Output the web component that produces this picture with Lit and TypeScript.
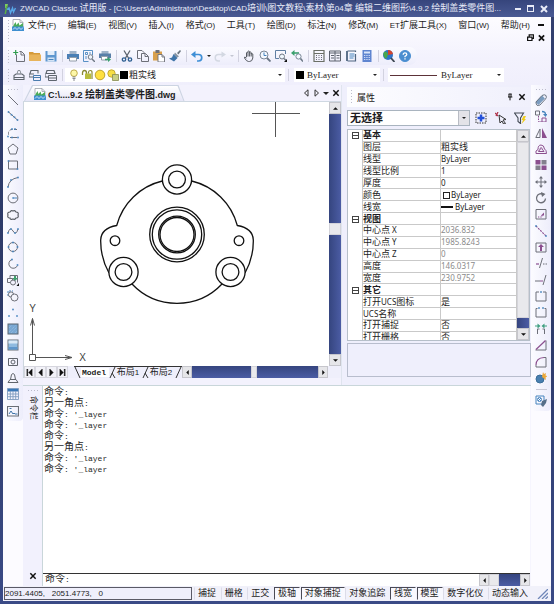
import { LitElement, html, svg, css, TemplateResult } from "lit";
import { customElement } from "lit/decorators.js";
import { classMap } from "lit/directives/class-map.js";

const G = "#6d6f78";
const B = "#4684be";
const P = "#8b4f8f";

const line = (d: string, c = G, w = 1, dash = "") =>
  svg`<path d=${d} fill="none" stroke=${c} stroke-width=${w} stroke-dasharray=${dash || "none"} />`;
const area = (d: string, c = B) => svg`<path d=${d} fill=${c} />`;
const ring = (x: number, y: number, r: number, c = G, f = "none", w = 1) =>
  svg`<circle cx=${x} cy=${y} r=${r} fill=${f} stroke=${c} stroke-width=${w} />`;
const dots = (...pts: number[][]) =>
  pts.map(([x, y]) => svg`<rect x=${x - 0.8} y=${y - 0.8} width="1.6" height="1.6" fill=${B} />`);

// Every glyph is drawn on a 12 x 12 grid.
const ICONS: Record<string, unknown> = {
  logo: [area("M1 1h3l-1 4H1z", "#7ccb5e"), area("M3.5 3L2 11H.5L2 3z", "#5bb047"), line("M3 6.500l2-1.500 1.500 5L8.500 5l1 4 2-4", "#58a8e8", 1.4)],
  doc: [area("M1 .5h7l3 3v8H1z", "#fff"), line("M1 .5h7l3 3v4M8 .5v3h3M1 .5v6", "#9aa0a8", 0.8), area("M.5 8l3-5 1 3 2-2.500 1 3L11 4v4z", "#4bab58"), area("M0 7.500h12V12H0z", "#3f8fd0"), line("M1 10.500l2-2 2 2 2-2 2 2 2-2", "#e8f6ff", 0.8)],
  new: [line("M3.5 4.500v7h8v-7l-3-3h-2M8 1.500v3.500h3.500", G), line("M.2 2.500h5M2.7 0v5", "#2f9d4e", 1.2)],
  open: [area("M0 2h4l1 1h6v2H0z", "#d59a3a"), area("M0 4.5h12v6.5H0z", "#e8b45c")],
  save: [area("M.5 1h11v10.5H.5z", "#5f97cf"), area("M2.5 1h7v4h-7z", "#e4eefa"), area("M2.5 7.5h7v4h-7z", "#d3e3f5"), line("M3.5 9.5h5", B, 1)],
  print: [area("M2.5 1h7v3h-7z", "#9fb2c8"), area("M0 4h12v5H0z", "#4a7fb5"), area("M2.5 7h7v4h-7z", "#fff"), line("M2.5 7.5h7v3.5h-7z", "#7a8796", 0.8)],
  preview: [line("M9.5 5V.5h-9v11h5M2.5 2.5h2v2h-2zM6 3h2M3 6v3", B, 0.9), ring(7.5, 7, 2.3, "#6f7884", "#eef6fd"), line("M9 9l3 3", "#6f7884", 1.4)],
  plot: [area("M2.5 1h7v3h-7z", "#9fb2c8"), area("M0 3.5h12v4.5H0z", "#587fa8"), area("M2.5 6h6v4h-6z", "#fff"), line("M2.5 6.5h6v3.5h-6z", "#7a8796", 0.8), area("M6 8.7h3V7l3 2.5L9 12v-1.700H6z", "#3aa06e")],
  cut: [line("M3 .5l4.500 7.500M9 .5L4.500 8", "#5c646e", 1.3), ring(3, 9.500, 1.700, "#2e5f92", "none", 1.3), ring(9, 9.500, 1.700, "#2e5f92", "none", 1.3)],
  copy: [line("M3.500 8.500h-3v-8h4.500l2 2v1", G), line("M4.500 3.500h4l3 3v5h-7zM8 3.500v3h3", G)],
  paste: [area("M0 1.500h9v9H0z", "#d9a04c"), area("M2.500 0h4v3h-4z", "#6d6f78"), area("M5 4.500h4l2.500 2.500v5H5z", "#fff"), line("M5 4.500h4l2.500 2.500v5H5zM9 4.500v2.500h2.500", G, 0.9)],
  brush: [area("M8 3l3-3 1 1-2.500 3.500z", "#69747f"), area("M6 2.500l4 4-2 1-3-3z", "#8593a1"), area("M4.500 4l4 4L5 11.500 0 8.500l3-1z", "#3f74a8")],
  undo: [line("M2 4.500h5.500a3 3 0 0 1 0 6.500H6", "#3f8fd6", 1.7), area("M4.500 1v7L0 4.500z", "#3f8fd6")],
  redo: [line("M10 4.500H4.500a3 3 0 0 0 0 6.500H6", "#d3d8e2", 1.5), area("M7.500 1.500v6L12 4.500z", "#d3d8e2")],
  hand: [line("M3.500 7V2.700q.8-1.200 1.500 0V1.500q.8-1.200 1.600 0v1q.8-1 1.600 0v1.500q.9-1 1.600 0V8q-.5 3.500-3.300 3.500h-1Q3.500 11.500 1.500 8q-.5-2 2 0M5 2.500v4M6.600 2v4.500M8.200 3v3.500", "#565a62", 1)],
  zoomrt: [ring(5, 5, 4, "#7a8796", "#f4f9ff"), line("M5 2.500V5.500H7.500", B, 1), line("M8 8l3.500 3.500", "#6b7785", 1.8)],
  zoomwin: [line("M4 8.500H.5v-8h10V4", "#5f7fa3"), ring(7, 6.500, 2.500, "#6f7884", "#eef6fd"), line("M9 8.500l2 2", "#6f7884", 1.6), area("M12 9v3H9z", "#111")],
  zoomprev: [line("M2 3h6", "#3aa06e", 1.6), area("M3.500 0v6L0 3z", "#3aa06e"), ring(7.500, 6.500, 2.600, "#7a8796", "#f4f9ff"), line("M9.500 8.500l2.500 3", "#6b7785", 1.6)],
  calcsheet: [line("M1 .5h10v11H1zM1 3.500h10", "#6b6f66", 1.2), line("M3 5.500h1M5.500 5.500h1M8 5.500h1M3 7.500h1M5.500 7.500h1M8 7.500h1M3 9.500h1M5.500 9.500h1M8 9.500h1", "#6d6f78", 1.2)],
  palette: [line("M.5 1h11v10H.5zM6 1v10M.5 3h11M2 5.500h3M2 8h3M7.500 5.500h3M7.500 8h3", "#5d636e", 1)],
  sheet: [line("M10.500 4v7h-8M2.500 1h8v1", "#4f6580", 1.2), line("M2 1v10", "#4f6580", 1.8), line("M4.500 4h5M4.500 6h5M4.500 8h4", B, 1)],
  calc: [area("M1.500 0h9v12h-9z", "#5f85d0"), area("M3 1.500h6v2H3z", "#dbe6fa"), line("M3 5.500h6M3 7.500h6M3 9.500h6", "#d0dcf6", 1, "1.300 1")],
  globe: [area("M5 0a5 5 0 0 1 0 10A5 5 0 0 1 5 0z", "#2f73c8"), area("M5 0q4 0 5 4L5 5z", "#d2452f"), area("M1 2q3-2 4 3l-2 4Q-1 6 1 2z", "#47a84c"), line("M8 8l3.500 4", "#3e4754", 1.8)],
  help: [ring(6, 6, 5.500, "#4a8ed0", "#4a8ed0"), line("M4.200 4.700q0-1.800 1.800-1.800t1.800 1.600Q7.800 5.500 6 6.300v1M6 8.300v1.300", "#fff", 1.3)],
  layers: [line("M1 6.500L3 5h6l2 1.500v4H1zM1 8.500h10", "#5f666f", 1.1), line("M4 5l1-3.500h2L8 5", "#8a9098", 1)],
  layerprev: [line("M1 4.500L2 1.500h7v3M0 5h5M0 8h4M0 5v3", "#5f666f", 1.1), line("M4.500 6.500h7v5h-7zM4.500 8.500h7", "#4b7daf", 1)],
  layerstate: [line("M1 4.500L2 1.500h7l1 3zM0 5v3h4", "#5f666f", 1.2), line("M3.500 6.500h8v5h-8zM3.500 9h8", "#5f666f", 1)],
  bulb: [ring(6, 4.200, 3.300, "#b8a23c", "#fdf7a8", 0.9), line("M4.500 8h3M4.500 9.500h3M5 11h2", "#7d7f88", 0.9)],
  lock: [line("M1.500 6V4q0-2.500 2-2.500T5.500 4v2", "#8a8a34", 1.3), area("M4 4.500h6V10H4z", "#b9bd3c"), line("M7.500 4.500V3q.3-1.500 2-1.500T11 4v6", "#8a8a34", 1.2)],
  sun: [ring(6, 6, 4.800, "#b79a26", "#ffe040", 0.9)],
  sunlayer: [ring(4.500, 4.500, 3.700, "#b79a26", "#f7df45", 0.8), area("M5.500 5.500h6v6h-6z", "#c9cf85"), line("M5.500 5.500h6v6h-6z", "#858a52", 0.8)],
  lineTool: [line("M1 1l10 10", G, 1)],
  xline: [line("M1 1.500l10 9", G, 1), dots([1.500, 2], [4.500, 4.700], [7.500, 7.300], [10.500, 10])],
  pline: [line("M10 2.500H5a3.500 3.500 0 0 0-3.500 4v2", G, 1, "3 1.500"), line("M3 10.500h7", G, 1), dots([5, 2], [1, 9.500], [5, 10.500], [11, 10.500], [8, 2])],
  polygon: [line("M6 1l5 4-2 6H3L1 5z", G, 1)],
  rect: [line("M1.500 2h9v8h-9z", G, 1), dots([1.500, 2], [10.500, 10])],
  arc: [line("M1 11Q2 3 11 1.500", G, 1), dots([1, 11], [4, 4], [11, 1.500])],
  circle: [ring(6, 6, 4.900), line("M6 6h4M6 5v2", B, 1)],
  cloud: [line("M3 3q1-2 3-1 2-1 3 1 3 0 2 3 1 3-2 3-1 2-3 1-3 1-3-1-3 0-2-3-1-3 2-3z", "#50545c", 1.1)],
  spline: [line("M1 8q2-7 5-2t5-2", G, 1), dots([1, 8], [4, 4], [8, 8], [11, 4])],
  ellipse: [ring(6, 6, 4.500), dots([6, 1.500], [1.500, 6], [6, 10.500], [10.500, 6])],
  earc: [line("M5 1.500a4.500 4.500 0 1 0 5.500 6", G, 1), dots([5, 1.500], [10.500, 7])],
  insert: [line("M3 1.500h7.500v7M3 1.500v3", G, 1), area("M7 2v2H5l3 3 3-3H9V2z", "#3f9f6d"), line("M.5 4.500h5v4h-5z", G), ring(6, 8.500, 2.500, G, "#f1f0fc"), area("M12 9v3H9.500z", "#111")],
  block: [line("M1 6V1h5", B, 1, "2 1"), ring(4, 4.500, 2.600, G), ring(7.500, 7.500, 3.500, G, "#f4f4fc")],
  points: [dots([6, 2.500], [2, 9], [10, 9])],
  hatch: [svg`<rect x="1" y="1" width="10" height="10" fill="#79a7d3" stroke="#5a6470" />`, line("M2 5l3-3M2 9l7-7M4 10l6-6M8 10l2-2", "#a8c8e6", 0.7, "1 1")],
  gradient: [svg`<rect x="1" y="1" width="10" height="10" fill="#8fbbe0" stroke="#6a7078" /><rect x="1.500" y="1.500" width="9" height="3" fill="#d9e9f6" /><rect x="1.500" y="8" width="9" height="2.500" fill="#5f97cc" />`],
  region: [line("M1.500 2.500h9v7h-9z", "#60646c", 1), ring(6, 6, 2, "#60646c")],
  wipe: [line("M3.500 7.500L4.500 2.500q1.500-2 3 0L8.500 7.500zM1 10.500L3 7.500h6l2 3z", "#60646c", 1)],
  table: [area("M.5.5h11v3H.5z", "#3a78b8"), line("M.5.5h11v11H.5zM.5 6h11M.5 8.700h11M3.300 3v8.500M6 3v8.500M8.700 3v8.500", "#7f9cc0", 0.9)],
  image: [line("M.5 1.500h11v9.500H.5z", "#6a6e76", 1.1), line("M2 9l2-3 2 3 1-1 1 1h2.500M2.500 3.500h2", "#3f74a8", 1)],
  erase: [line("M2 9.500L8.500 3", "#7b9cbf", 4), line("M1 8l6-6.500q2.500-1.500 4 0 1 2-.5 3.500L5 11q-4 2-4-3z", "#6a7684", 1)],
  copyobj: [line("M.5 1h4v4h-4z", G), line("M7 1.500q3.500 0 3.500 3", B, 1.300), area("M8 4h4.500L10.500 7z", B), line("M3.500 6v5.500h3", P, 1, "1.500 1"), line("M7 8h4v4H7z", P)],
  mirror: [area("M7 1l5 10H7z", P), line("M5 2L.8 10.500H5z", G, 1)],
  offset: [line("M1 10.500q-1-3 2-4Q3 2 6 2t3.500 4q2 1 2 4.500z", P, 1), line("M3.500 8.500q0-1.500 1.500-1.500Q5 4.500 6 4.500T7.500 7q1 0 1.500 1.500z", P, 1)],
  array: [area("M.5 1h5v4.500h-5zM6.500 6.500h5v4.500h-5z", P), area("M6.500 1h5v4.500h-5zM.5 6.500h5v4.500h-5z", "#83808e")],
  move: [line("M6 1.500v9M1.500 6h9", G, 1), area("M6 0l2 2.500H4zM6 12l2-2.500H4zM0 6l2.500-2v4zM12 6L9.500 4v4z", G)],
  rotate: [line("M8.500 2.500A4.500 4.500 0 1 0 10.500 6.500", G, 1.3), area("M6 0l4.500 2L7 5z", G)],
  scale: [line("M1 1.500h10v9.500H1z", G), line("M3 9h4M7 7v2", P, 1, "1 .7"), area("M9 4.500v3H6z", P)],
  stretch: [line("M1 1l10 10", P, 1.1, "2 1"), dots([1, 1], [11, 11])],
  extrude: [line("M1 2h10v9H1z", G), area("M6 3l3 3H7v4H5V6H3z", P)],
  trim: [line("M1 7h3", P, 1.200), line("M4.500 11L7.500 1", G), line("M8 7h4", G, 1, "1.500 1")],
  extend: [line("M0 7h5", G, 1), line("M5 7h3", P), line("M8 11l3-10", G)],
  break1: [line("M4 2H1v9h10V2H8", G, 1), dots([6, 2])],
  break2: [line("M2.500 2.500H1V11h10V2.500H9.500", G, 1), dots([4, 2], [8, 2])],
  join: [line("M2.500 11V6h2M9.500 11V6h-2", G), area("M5.500 3L2.500.5v5zM6.500 3l3-2.500v5z", "#3f9f80"), line("M0 3h4M8 3h4", "#3f9f80", 1.200)],
  chamfer: [line("M.5 11h10.500V1.500", G), line("M1 10.500L10.500 1.500", P, 1.200)],
  fillet: [line("M1 9v2h10V1.500H9", G), line("M1 9q0-7 8-7.500", P, 1.200)],
  explode: [ring(5, 7, 4, "#3a6d98", "#487fb0"), area("M8 0l1 2 2-1-.5 2.500 2 .5-2 1.500L11 8 9 6.500 7 5z", "#eba83a")],
  props: [line("M1 1h8v8H1z", B, 1), line("M3 3l3 3M3 6l3-3", B, 1), ring(4.500, 4.500, 2, B), area("M7 6l5-2-1 4-3 4-2-2z", "#566f88")],
  pick: [line("M1 1h10v10H1z", "#333", 1, "1.500 1"), line("M6 2.500v7M2.500 6h7", "#2450d8", 2.500)],
  selobj: [line("M0 1l3 3M3 0L1 4", "#b03048", 1.2), line("M4 3l7 4.500-3 .5 2.500 3.500-2 .5L7 9l-2 2z", "#333", 1)],
  filter: [line("M.5 1h9L6.500 6v5.500L4 9.500V6z", "#444b55", 1.1), area("M9.500 4h2.500L10.500 7H12L7.500 12 9 8H7.500z", "#f0cc1c")],
  pin: [line("M4 1.500h4.500M4.500 1.500V6M7.500 1.500V6M3 6h6.500M6 6v5", "#111", 1.500)],
  close: [line("M2 2l8 8M10 2l-8 8", "#111", 2.200)],
};

const icon = (name: string, cls = "ic") =>
  html`<svg class=${cls} viewBox="0 0 12 12" aria-hidden="true">${ICONS[name]}</svg>`;

// Splits text so that Han runs can take a slightly larger size than the Latin ones.
const mix = (text: string) =>
  text
    .split(/([\u4e00-\u9fff]+)/)
    .filter((s) => s)
    .map((s) => (/[\u4e00-\u9fff]/.test(s) ? html`<span class="cj">${s}</span>` : s));

const btn = (name: string) => html`<button class="ib" aria-label=${name}>${icon(name)}</button>`;

const STANDARD = [
  "new open save", "print preview plot", "cut copy paste brush",
  "undo v redo w", "hand zoomrt zoomwin zoomprev", "calcsheet palette sheet calc", "globe help",
];
const DRAW = "lineTool xline pline polygon rect arc circle cloud spline ellipse earc insert block points hatch gradient region wipe table image".split(" ");
const MODIFY = "erase copyobj mirror offset array move rotate scale stretch extrude trim extend break1 break2 join chamfer fillet explode".split(" ");
const MENUS = ["文件(F)", "编辑(E)", "视图(V)", "插入(I)", "格式(O)", "工具(T)", "绘图(D)", "标注(N)", "修改(M)", "ET扩展工具(X)", "窗口(W)", "帮助(H)"];

interface Row { k: string; v?: string; head?: boolean; dim?: boolean; mark?: string }
const ROWS: Row[] = [
  { k: "基本", head: true }, { k: "图层", v: "粗实线" }, { k: "线型", v: "ByLayer" },
  { k: "线型比例", v: "1" }, { k: "厚度", v: "0" }, { k: "颜色", v: "ByLayer", mark: "swatch" },
  { k: "线宽", v: "ByLayer", mark: "dash" }, { k: "视图", head: true },
  { k: "中心点 X", v: "2036.832", dim: true }, { k: "中心点 Y", v: "1985.8243", dim: true },
  { k: "中心点 Z", v: "0", dim: true }, { k: "高度", v: "146.0317", dim: true },
  { k: "宽度", v: "230.9752", dim: true }, { k: "其它", head: true },
  { k: "打开UCS图标", v: "是" }, { k: "UCS名称", v: "" }, { k: "打开捕捉", v: "否" }, { k: "打开栅格", v: "否" },
];
const MODES: [string, boolean][] = [
  ["捕捉", false], ["栅格", false], ["正交", false], ["极轴", true], ["对象捕捉", true],
  ["对象追踪", false], ["线宽", true], ["模型", true], ["数字化仪", false], ["动态输入", false],
];
const LOG = ["命令:", "另一角点:", "命令: '_layer", "命令: '_layer", "命令:", "另一角点:", "命令: '_layer", "命令: '_layer"];

const base = css`
  * { box-sizing: border-box; }
  button, select, input {
    font: inherit; color: inherit; background: none; border: 0; padding: 0; margin: 0;
    border-radius: 0; appearance: none; outline: none; min-width: 0;
  }
  .cj { font-size: 9px; }
  .ic { width: 12px; height: 12px; display: block; flex: none; }
  .ib { width: 16px; height: 16px; flex: none; display: flex; align-items: center; justify-content: center; }
  .tri { width: 0; height: 0; flex: none; border: 3px solid transparent; border-top-color: #222; border-bottom: 0; }
  .grip { width: 3px; align-self: stretch; flex: none; background: radial-gradient(circle, #bcbccb 1px, transparent 1px) 0 0 / 3px 3px; }
  .griph { height: 3px; width: 12px; flex: none; background: radial-gradient(circle, #bcbccb 1px, transparent 1px) 0 0 / 3px 3px; }
`;

@customElement("scroll-bar")
export class ScrollBar extends LitElement {
  static properties = { dir: { type: String, reflect: true }, lead: { type: Number }, trail: { type: Number }, thumb: { type: Number } };
  declare dir: string;
  declare lead: number;
  declare trail: number;
  declare thumb: number;
  static styles = [base, css`
    :host { display: flex; flex: none; background: #42539a; }
    :host([dir="v"]) { flex-direction: column; width: 12px; background: linear-gradient(90deg, #35457f, #4b5ca4); }
    :host([dir="h"]) { height: 12px; background: linear-gradient(#35457f, #4b5ca4); }
    .end { flex: none; width: 12px; height: 12px; background: #e6e6e9; border: 1px solid #c6c6cc; display: flex; align-items: center; justify-content: center; }
    :host([dir="h"]) .end { width: 10px; }
    .thumb { flex: none; background: #e9e9ec; border: 1px solid #d4d4da; }
    .a { width: 5px; height: 5px; fill: #111; }
  `];
  render() {
    const v = this.dir === "v";
    const tri = (d: string) => html`<svg class="a" viewBox="0 0 6 6"><path d=${d} /></svg>`;
    return html`
      <button class="end" aria-label="back">${tri(v ? "M0 4.500h6L3 1.500z" : "M4.500 0v6L1.500 3z")}</button>
      <span style="flex:${this.lead}"></span>
      <span class="thumb" style=${v ? `height:${this.thumb}px` : `width:${this.thumb}px`}></span>
      <span style="flex:${this.trail}"></span>
      <button class="end" aria-label="forward">${tri(v ? "M0 1.500h6L3 4.500z" : "M1.500 0v6L4.500 3z")}</button>`;
  }
}

@customElement("cad-drawing")
export class CadDrawing extends LitElement {
  static styles = css`
    :host { display: block; flex: 1; min-width: 0; background: #fff; }
    svg { display: block; width: 100%; height: 264px; }
    .part { fill: none; stroke: #111; stroke-width: 1.3; }
    .boss { fill: #fff; }
    .thin { fill: none; stroke: #555; stroke-width: 1; }
    text { font: 10px "Liberation Sans", sans-serif; fill: #444; text-anchor: middle; }
  `;
  render() {
    const c = (x: number, y: number, r: number, cls = "part") => svg`<circle class=${cls} cx=${x} cy=${y} r=${r} />`;
    const boss = (x: number, y: number) => [c(x, y, 14.6, "part boss"), c(x, y, 8.4)];
    return html`<svg viewBox="24 102 303 264" preserveAspectRatio="xMinYMin meet">
      <path class="part" d="M162.300 181A62 62 0 0 0 116.700 225.500C108 227 101 231 100.700 240C100.500 252 104 264 109 273" />
      <path class="part" d="M191.700 181A62 62 0 0 1 237.300 225.500C246 227 253 231 253.300 240C253.500 252 250 264 245 273" />
      <path class="part" d="M132 284A62 62 0 0 0 222 284" />
      ${boss(177, 179.5)}${boss(123.5, 272)}${boss(230.5, 272)}
      ${c(115, 240.7, 4.8)}${c(239, 240.7, 4.8)}
      ${c(177, 234.5, 27.3)}${c(177, 234.5, 24.7)}${c(177, 234.5, 18.3)}${c(177, 234.5, 17)}
      <path class="thin" d="M29.500 354.500h6v6h-6zM32.500 354.500v-36M30.500 325.500l2-7 2 7M35.500 357.500h36M65 355.500l7 2-7 2" />
      <path class="thin" d="M252 113.500h48M275.500 102v35" />
      <text x="32.500" y="312">Y</text>
      <text x="82.500" y="361">X</text>
    </svg>`;
  }
}

@customElement("property-panel")
export class PropertyPanel extends LitElement {
  static styles = [base, css`
    :host { display: flex; flex-direction: column; width: 190px; flex: none; padding: 2px 0 8px 5px; border-left: 1px solid #dfe4ee; background: #efeffc; }
    .head { display: flex; align-items: center; height: 20px; padding: 2px 5px 2px 3px; gap: 4px; background: linear-gradient(90deg, #fdfdff, #f0f0fc); }
    .head h2 { margin: 0; font-size: 9px; font-weight: 400; flex: 1; }
    .sm { width: 8px; height: 8px; }
    .sb { width: 8px; height: 8px; }
    .pick { display: flex; align-items: center; height: 17px; margin: 2px 0 3px; }
    .combo { display: flex; width: 123px; height: 16px; background: #fff; border: 1px solid #a9b4bf; align-items: center; }
    .combo select { flex: 1; height: 14px; font: 700 11px "Liberation Sans", "Noto Sans CJK SC", sans-serif; padding-left: 2px; }
    .drop { width: 11px; height: 14px; background: #e3e3e8; border-left: 1px solid #b9bcc4; display: flex; align-items: center; justify-content: center; }
    .drop .tri { border-width: 2px; border-bottom: 0; }
    .tools { display: flex; flex: 1; justify-content: space-evenly; }
    .box { display: flex; height: 212px; margin-right: 1px; border: 1px solid #b6bfc9; background: #fff; overflow: hidden; align-items: stretch; }
    .grid { flex: 1; overflow: hidden; }
    table { width: 100%; height: 214px; border-spacing: 0; table-layout: fixed; font: 8px "Noto Sans", "Noto Sans CJK SC", sans-serif; }
    td, th { padding: 0; font-weight: 400; text-align: left; line-height: 10px; height: 11px; border-bottom: 1px solid #c9c9c9; border-right: 1px solid #c9c9c9; white-space: nowrap; }
    .c1 { width: 15px; }
    .c2 { width: 78px; }
    td.e { border-bottom: 0; text-align: center; }
    .exp { display: block; width: 7px; height: 7px; margin: 0 auto; border: 1px solid #444; background: linear-gradient(#444, #444) center / 5px 1px no-repeat; }
    tr.h th { font-weight: 700; }
    .dim { color: #8b8b8b; }
    .swatch { display: inline-block; width: 7px; height: 7px; border: 1px solid #222; margin: 0 1px 0 2px; vertical-align: -1px; }
    .dash { display: inline-block; width: 12px; height: 2px; background: #111; margin-right: 2px; vertical-align: 2px; }
    .note { height: 34px; margin-top: 2px; border: 1px solid #b8bdcd; }
  `];
  render() {
    return html`
      <div class="head"><span class="grip"></span><h2>属性</h2>
        <button class="sb" aria-label="pin">${icon("pin", "sm")}</button>
        <button class="sb" aria-label="close">${icon("close", "sm")}</button></div>
      <div class="pick">
        <div class="combo"><select aria-label="选择"><option>无选择</option></select><span class="drop"><i class="tri"></i></span></div>
        <div class="tools">${["pick", "selobj", "filter"].map(btn)}</div>
      </div>
      <div class="box">
        <div class="grid"><table>
          <colgroup><col class="c1" /><col class="c2" /><col /></colgroup>
          <tbody>${ROWS.map((r) => html`<tr class=${classMap({ h: !!r.head })}>
            <td class="e">${r.head ? html`<span class="exp"></span>` : ""}</td>
            <th scope="row">${mix(r.k)}</th>
            <td class=${classMap({ dim: !!r.dim })}>${r.mark ? html`<i class=${r.mark}></i>` : ""}${mix(r.v ?? "")}</td>
          </tr>`)}</tbody>
        </table></div>
        <scroll-bar dir="v" .lead=${0} .trail=${1} .thumb=${176}></scroll-bar>
      </div>
      <div class="note"></div>`;
  }
}

@customElement("app-root")
export class AppRoot extends LitElement {
  static styles = [base, css`
    :host { display: flex; flex-direction: column; min-height: 100vh; box-sizing: border-box; overflow: hidden;
      padding: 0 3px 3px 3px; background: linear-gradient(#33406f, #2d3a68 50%, #3a4a86);
      font: 8px "Liberation Sans", "Noto Sans CJK SC", sans-serif; color: #1c1c22; }
    .title { display: flex; align-items: center; height: 17px; margin: 0 -3px; padding: 0 4px; color: #e9ecf8; background: linear-gradient(#36457c, #4a5a94); }
    .title h1 { margin: 0 0 0 4px; font-size: 8px; font-weight: 400; flex: 1; white-space: nowrap; line-height: 14px; }
    .wb { width: 13px; height: 12px; display: flex; align-items: center; justify-content: center; }
    .wmin { width: 6px; height: 2px; background: currentColor; align-self: center; }
    .wmax { width: 7px; height: 7px; border: 1px solid currentColor; border-top-width: 2px; }
    .wx { width: 8px; height: 8px; stroke: currentColor; stroke-width: 2; fill: none; }
    .chrome { background: linear-gradient(#fdfcff, #f3f2fd 60%, #f0effc); display: flex; flex-direction: column; padding: 2px 0 0 4px; }
    .menu { display: flex; height: 24px; gap: 2px; margin-bottom: 4px; }
    .menuicon { height: 12px; margin: 0 2px 0 0; }
    .items { flex: 1; display: flex; justify-content: space-between; height: 12px; }
    .items button { line-height: 12px; white-space: nowrap; }
    .mdi { display: flex; flex-wrap: wrap; width: 18px; align-content: space-between; justify-content: flex-end; padding: 1px 6px 1px 0; margin-left: 1px; }
    .mdi button { height: 9px; display: flex; align-items: center; color: #111; width: 7px; }
    .mdirow { display: flex; gap: 4px; margin-left: -8px; }
    .restore { width: 7px; height: 7px; fill: none; stroke: #111; stroke-width: 1.4; }
    .bar { display: flex; align-items: center; height: 18px; margin-bottom: 1px; }
    .bar.std { width: max-content; border-radius: 0 8px 8px 0; background: linear-gradient(#fbfbff, #ededfb); padding-right: 4px; }
    .bar .grip { margin: 2px 1px 2px 0; }
    .sep { width: 6px; height: 12px; flex: none; background: linear-gradient(#d2d2e0, #d2d2e0) center / 1px 100% no-repeat; }
    .va { width: 7px; display: flex; justify-content: center; }
    .va .tri, .field .tri { border-width: 2px; border-bottom: 0; }
    .va.off .tri { border-top-color: #c3c6d2; }
    .field { display: flex; align-items: center; height: 14px; background: #fff; padding: 0 3px; gap: 1px; }
    .field select { flex: 1; height: 14px; font: 9px "Liberation Serif", "Noto Sans CJK SC", serif; }
    .f1 { width: 220px; }
    .f2 { width: 86px; margin-left: 3px; gap: 3px; padding-left: 2px; }
    .f3 { width: 116px; margin-left: 2px; gap: 4px; padding-left: 2px; }
    .ink { width: 8px; height: 8px; background: #000; flex: none; }
    .lt { width: 47px; height: 1px; background: #5c3238; flex: none; }
    .work { flex: 1; display: flex; background: #f6f5fe; }
    .side { width: 20px; flex: none; display: flex; flex-direction: column; align-items: center; background: #fcfbff; }
    .tools { display: flex; flex-direction: column; align-items: center; width: 19px; background: linear-gradient(90deg, #fbfbff, #ededfb); padding: 3px 0 2px; gap: 1px; border-radius: 0 0 4px 4px; }
    .stack { display: flex; flex-direction: column; justify-content: space-between; align-items: center; }
    .s20 { height: 327px; }
    .s18 { height: 294px; }
    .hr { width: 11px; height: 1px; background: #c9c9d6; margin: 2px 0; }
    .mid { flex: 1; min-width: 0; display: flex; flex-direction: column; }
    .top { display: flex; border-bottom: 1px solid #c9d6da; }
    .doc { flex: 1; min-width: 0; display: flex; flex-direction: column; background: #f3f2fd; }
    .tabs { height: 17px; display: flex; align-items: flex-end; padding: 0 1px 0 1px; border-bottom: 1px solid #cfd8e2; }
    .edge { background: #ccd4e2; clip-path: polygon(0 100%, 8px 0, calc(100% - 6px) 0, 100% 100%); padding: 1px 1px 0; }
    .tab { height: 15px; display: flex; align-items: center; gap: 2px; padding: 0 8px 0 9px; background: linear-gradient(#fff, #e6e6f7); clip-path: polygon(0 100%, 8px 0, calc(100% - 6px) 0, 100% 100%); font-weight: 700; font-size: 9px; white-space: nowrap; }
    .tab .cj { font-size: 10px; }
    .tabctl { margin-left: auto; display: flex; align-items: center; gap: 2px; height: 16px; }
    .tabctl button { width: 8px; height: 10px; display: flex; align-items: center; justify-content: center; }
    .tn { width: 7px; height: 8px; fill: none; stroke: #333; }
    .sm { width: 8px; height: 8px; }
    .view { display: flex; border-left: 1px solid #cdd6de; }
    .sheets { display: flex; height: 12px; background: #efeffb; border-left: 1px solid #cdd6de; margin-bottom: 5px; }
    .nav { width: 11px; height: 12px; flex: none; border: 1px solid #d6d6de; background: #f2f2f8; display: flex; align-items: center; justify-content: center; }
    .nav svg { width: 7px; height: 7px; fill: #111; stroke: #111; stroke-width: 0.5; }
    .sheettabs { display: flex; flex: 1; min-width: 0; align-items: center; border-top: 1px solid #333; margin-left: 6px; line-height: 11px; overflow: hidden; white-space: nowrap; }
    .sheettabs button { padding: 0 4px 0 1px; }
    .slash { width: 7px; height: 11px; flex: none; fill: none; stroke: #333; }
    .sheettabs .model { font: 700 8px "Liberation Mono", monospace; background: #fff; }
    .hs { width: 146px; margin-right: 13px; }
    .cmd { flex: 1; display: flex; background: #fff; margin-right: 1px; }
    .cmdside { width: 20px; flex: none; display: flex; flex-direction: column; align-items: center; background: #f2f1fd; border-right: 1px solid #c9d6da; padding: 3px 0 4px; }
    .cmdside .lab { writing-mode: vertical-rl; text-orientation: sideways; font-size: 8px; line-height: 12px; margin-top: 4px; }
    .cmdside button { margin-top: auto; }
    .con { flex: 1; min-width: 0; display: flex; flex-direction: column; font: 8px "Liberation Mono", "Noto Sans CJK SC", monospace; color: #2a2a2a; }
    .con .cj { font-size: 10px; }
    .log { flex: 1; margin: 0; padding: 1px 0 0 1px; font: inherit; line-height: 11px; }
    .log div { height: 11px; white-space: pre; }
    .entry { display: flex; height: 13px; border-top: 1px solid #333; }
    .entry label { padding-left: 2px; line-height: 12px; }
    .entry input { flex: 1; }
    .cs { width: 51px; }
    .status { display: flex; align-items: center; height: 15px; background: #f1f1fa; padding: 1px 3px 1px 1px; }
    .coord { width: 188px; height: 13px; border: 1px solid #5a5a66; line-height: 11px; white-space: pre; background: #efeffb; }
    .modes { flex: 1; display: flex; justify-content: space-between; margin: 0 5px 0 2px; }
    .mode { height: 13px; padding: 0 3px; line-height: 11px; border: 1px solid transparent; border-left-color: #dcdce8; font-size: 9px; white-space: nowrap; }
    .mode.on { border-color: #4a4a55 transparent transparent #4a4a55; background: #f8f8fe; }
    .size { width: 11px; height: 10px; stroke: #6f86b8; stroke-width: 1.3; fill: none; }
  `];

  private std(name: string): TemplateResult {
    if (name === "v" || name === "w") return html`<button class=${classMap({ va: true, off: name === "w" })} aria-label="more"><i class="tri"></i></button>`;
    return btn(name);
  }

  render() {
    const sep = html`<span class="sep"></span>`;
    const x = html`<svg class="wx" viewBox="0 0 8 8"><path d="M1 1l6 6M7 1l-6 6" /></svg>`;
    const nav = (d: string) => html`<button class="nav" aria-label="sheet"><svg viewBox="0 0 8 8"><path d=${d} /></svg></button>`;
    const slash = (d: string) => html`<svg class="slash" viewBox="0 0 7 11"><path d=${d} /></svg>`;
    return html`
      <header class="title">${icon("logo")}
        <h1>${mix("ZWCAD Classic 试用版 - [C:\\Users\\Administrator\\Desktop\\CAD培训\\图文教程\\素材\\第04章 编辑二维图形\\4.9.2  绘制盖类零件图...")}</h1>
        <button class="wb" aria-label="minimize"><i class="wmin"></i></button>
        <button class="wb" aria-label="maximize"><i class="wmax"></i></button>
        <button class="wb" aria-label="close">${x}</button>
      </header>
      <div class="chrome">
        <nav class="menu"><span class="grip"></span><span class="menuicon">${icon("doc")}</span>
          <div class="items">${MENUS.map((m) => html`<button>${mix(m)}</button>`)}</div>
          <div class="mdi"><button aria-label="minimize"><i class="wmin"></i></button>
            <div class="mdirow"><button aria-label="restore"><svg class="restore" viewBox="0 0 8 8"><path d="M2.500 3V1h5v4H6M.7 3.500h5v4h-5z" /></svg></button>
            <button aria-label="close">${x}</button></div></div>
        </nav>
        <div class="bar std"><span class="grip"></span>
          ${STANDARD.map((g, i) => html`${i ? sep : ""}${g.split(" ").map((n) => this.std(n))}`)}
        </div>
        <div class="bar"><span class="grip"></span>${["layers", "layerprev", "layerstate"].map(btn)}${sep}
          <div class="field f1">${["bulb", "lock", "sun", "sunlayer"].map((n) => icon(n))}<i class="ink"></i>
            <select aria-label="图层"><option>粗实线</option></select><i class="tri"></i></div>${sep}
          <div class="field f2"><i class="ink"></i><select aria-label="颜色"><option>ByLayer</option></select><i class="tri"></i></div>${sep}
          <div class="field f3"><i class="lt"></i><select aria-label="线型"><option>ByLayer</option></select><i class="tri"></i></div>
        </div>
      </div>
      <div class="work">
        <div class="side"><div class="tools"><span class="griph"></span><div class="stack s20">${DRAW.map(btn)}</div></div></div>
        <div class="mid">
          <div class="top">
            <section class="doc">
              <div class="tabs">
                <div class="edge"><div class="tab">${icon("doc")}<span>${mix("C:\\....9.2  绘制盖类零件图.dwg")}</span></div></div>
                <div class="tabctl">
                  <button aria-label="previous"><svg class="tn" viewBox="0 0 7 8"><path d="M5 .8v6.400L1.500 4z" /></svg></button>
                  <button aria-label="next"><svg class="tn" viewBox="0 0 7 8"><path d="M2 .8v6.400L5.500 4z" /></svg></button>
                  <button aria-label="list"><i class="tri"></i></button>
                  <button aria-label="close">${icon("close", "sm")}</button>
                </div>
              </div>
              <div class="view"><cad-drawing></cad-drawing><scroll-bar dir="v" .lead=${109} .trail=${118} .thumb=${12}></scroll-bar></div>
              <div class="sheets">
                ${nav("M1 0h1v8H1zM7 0v8L3 4z")}${nav("M6 0v8L2 4z")}${nav("M2 0v8l4-4z")}${nav("M6 0h1v8H6zM1 0v8l4-4z")}
                <div class="sheettabs">${slash("M1 0l5 11")}<button class="model">Model</button>${slash("M6 0L1 11M3 6l3 5")}
                  <button>${mix("布局1")}</button>${slash("M6 0L1 11M3 6l3 5")}<button>${mix("布局2")}</button>${slash("M6 0L1 11")}</div>
                <scroll-bar class="hs" dir="h" .lead=${58} .trail=${60} .thumb=${6}></scroll-bar>
              </div>
            </section>
            <property-panel></property-panel>
          </div>
          <section class="cmd">
            <div class="cmdside"><span class="griph"></span><span class="lab">命令栏</span><button aria-label="close">${icon("close", "sm")}</button></div>
            <div class="con">
              <div class="log">${LOG.map((l) => html`<div>${mix(l)}</div>`)}</div>
              <div class="entry"><label for="c">${mix("命令:")}</label><input id="c" type="text" />
                <scroll-bar class="cs" dir="h" .lead=${0} .trail=${1} .thumb=${10}></scroll-bar></div>
            </div>
          </section>
        </div>
        <div class="side"><div class="tools"><span class="griph"></span><div class="stack s18">${MODIFY.map(btn)}</div><i class="hr"></i>${btn("props")}</div></div>
      </div>
      <footer class="status">
        <div class="coord">2091.4405,   2051.4773,   0</div>
        <div class="modes">${MODES.map(([t, on]) => html`<button class=${classMap({ mode: true, on })} aria-pressed=${on ? "true" : "false"}>${t}</button>`)}</div>
        <svg class="size" viewBox="0 0 11 10"><path d="M1 10L11 0M5 10l6-6M8.500 10L11 7.500" /></svg>
      </footer>`;
  }
}
